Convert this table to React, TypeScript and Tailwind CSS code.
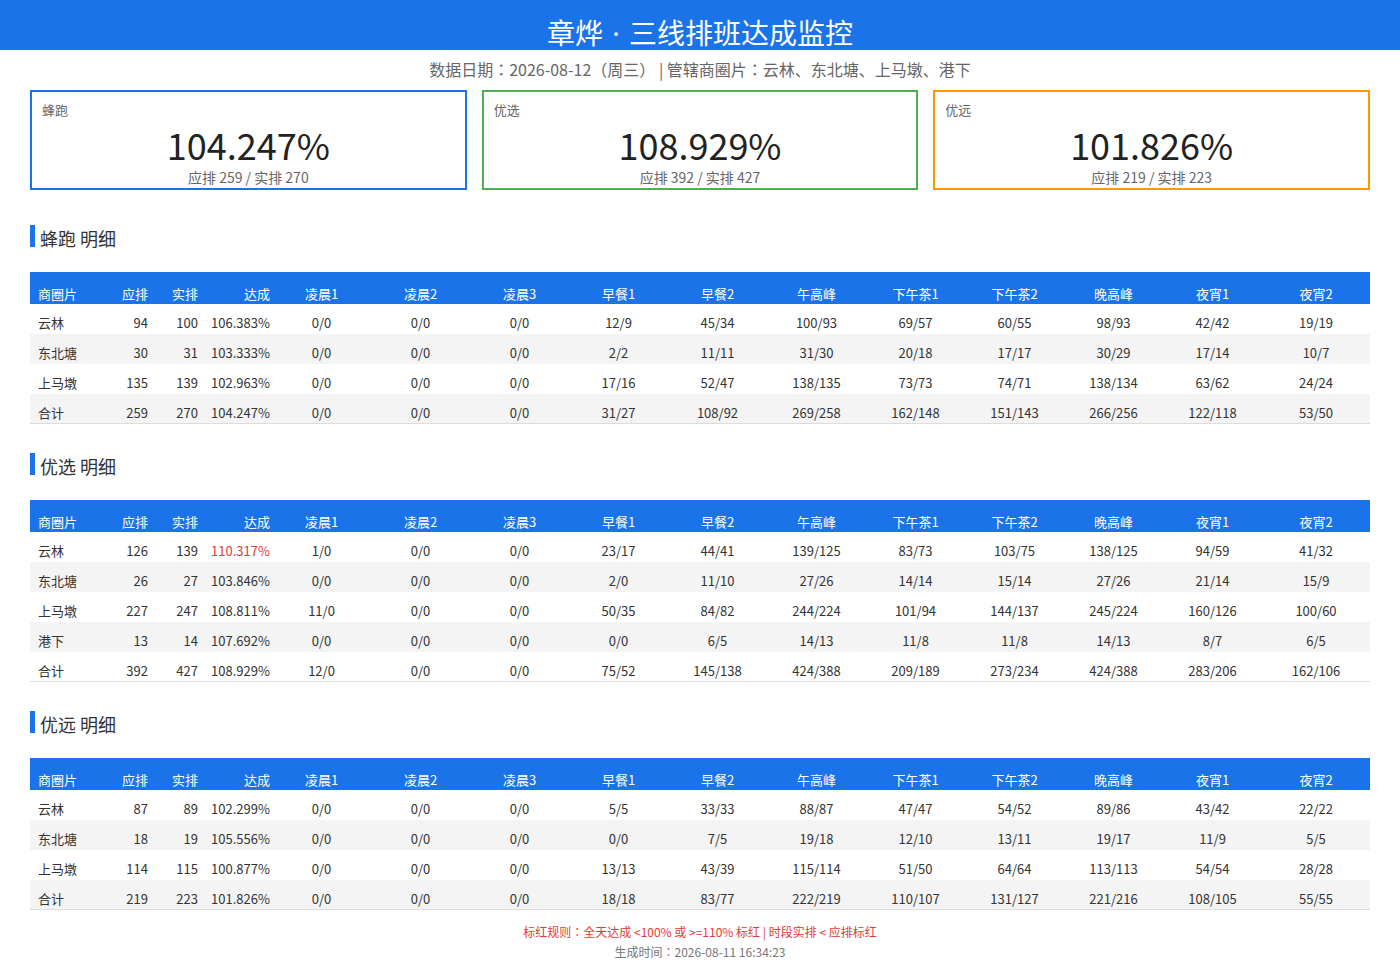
import React from "react";

type Row = { name: string; plan: string; actual: string; rate: string; red?: boolean; slots: string[] };

const HEAD = ["凌晨1", "凌晨2", "凌晨3", "早餐1", "早餐2", "午高峰", "下午茶1", "下午茶2", "晚高峰", "夜宵1", "夜宵2"];

const mk = (s: string, red = false): Row => {
  const p = s.split(" ");
  return { name: p[0], plan: p[1], actual: p[2], rate: p[3], red, slots: p.slice(4) };
};

const T1: Row[] = [
  mk("云林 94 100 106.383% 0/0 0/0 0/0 12/9 45/34 100/93 69/57 60/55 98/93 42/42 19/19"),
  mk("东北塘 30 31 103.333% 0/0 0/0 0/0 2/2 11/11 31/30 20/18 17/17 30/29 17/14 10/7"),
  mk("上马墩 135 139 102.963% 0/0 0/0 0/0 17/16 52/47 138/135 73/73 74/71 138/134 63/62 24/24"),
  mk("合计 259 270 104.247% 0/0 0/0 0/0 31/27 108/92 269/258 162/148 151/143 266/256 122/118 53/50"),
];
const T2: Row[] = [
  mk("云林 126 139 110.317% 1/0 0/0 0/0 23/17 44/41 139/125 83/73 103/75 138/125 94/59 41/32", true),
  mk("东北塘 26 27 103.846% 0/0 0/0 0/0 2/0 11/10 27/26 14/14 15/14 27/26 21/14 15/9"),
  mk("上马墩 227 247 108.811% 11/0 0/0 0/0 50/35 84/82 244/224 101/94 144/137 245/224 160/126 100/60"),
  mk("港下 13 14 107.692% 0/0 0/0 0/0 0/0 6/5 14/13 11/8 11/8 14/13 8/7 6/5"),
  mk("合计 392 427 108.929% 12/0 0/0 0/0 75/52 145/138 424/388 209/189 273/234 424/388 283/206 162/106"),
];
const T3: Row[] = [
  mk("云林 87 89 102.299% 0/0 0/0 0/0 5/5 33/33 88/87 47/47 54/52 89/86 43/42 22/22"),
  mk("东北塘 18 19 105.556% 0/0 0/0 0/0 0/0 7/5 19/18 12/10 13/11 19/17 11/9 5/5"),
  mk("上马墩 114 115 100.877% 0/0 0/0 0/0 13/13 43/39 115/114 51/50 64/64 113/113 54/54 28/28"),
  mk("合计 219 223 101.826% 0/0 0/0 0/0 18/18 83/77 222/219 110/107 131/127 221/216 108/105 55/55"),
];

const GRID = "grid grid-cols-[70px_50px_50px_72px_repeat(10,99px)_1fr]";

const Colon = () => <span className="font-['Noto_Sans_CJK_JP']">：</span>;

function Card({ title, value, sub, border }: { title: string; value: string; sub: string; border: string }) {
  return (
    <div className={`h-[100px] border-2 ${border} px-[10px] pt-[9px] flex flex-col`}>
      <div className="text-[13px] leading-[18px] text-[#666]">{title}</div>
      <div className="mt-[8px] text-center text-[36px] leading-[34px] text-[#222]">{value}</div>
      <div className="mt-[7px] text-center text-[14px] leading-[18px] text-[#666]">{sub}</div>
    </div>
  );
}

function Section({ title, rows, mt }: { title: string; rows: Row[]; mt: string }) {
  return (
    <div className={mt}>
      <div className="flex items-center h-[22px]">
        <div className="w-[5px] h-[22px] bg-[#1a73e8]" />
        <div className="ml-[5px] text-[18px] leading-[22px] translate-y-[2px] text-[#333]">{title}</div>
      </div>
      <div className="mt-[25px] text-[13px]">
        <div className={`${GRID} h-[32px] bg-[#1a73e8] text-white leading-[20px] pt-[12px]`}>
          <div className="pl-[8px]">商圈片</div>
          <div className="text-right pr-[2px]">应排</div>
          <div className="text-right pr-[2px]">实排</div>
          <div className="text-right pr-[2px]">达成</div>
          {HEAD.map((h) => (
            <div key={h} className="text-center">{h}</div>
          ))}
        </div>
        {rows.map((r, i) => (
          <div
            key={r.name}
            className={`${GRID} h-[30px] leading-[20px] pt-[9px] text-[#333] ${i % 2 === 1 ? "bg-[#f4f4f4]" : "bg-white"} ${i === rows.length - 1 ? "border-b border-[#dddddd]" : ""}`}
          >
            <div className="pl-[8px]">{r.name}</div>
            <div className="text-right pr-[2px]">{r.plan}</div>
            <div className="text-right pr-[2px]">{r.actual}</div>
            <div className={`text-right pr-[2px] ${r.red ? "text-[#e53935]" : ""}`}>{r.rate}</div>
            {r.slots.map((s, j) => (
              <div key={j} className="text-center">{s}</div>
            ))}
          </div>
        ))}
      </div>
    </div>
  );
}

export default function App() {
  return (
    <div className="w-[1400px] min-h-[974px] bg-white" style={{ fontFamily: '"Noto Sans CJK SC", "Noto Sans", sans-serif' }}>
      <div className="h-[50px] bg-[#1a73e8] flex justify-center pt-[14px]">
        <div className="text-white text-[28px] leading-[36px] whitespace-nowrap">
          章烨 <span className="font-['Noto_Sans'] mx-[3px]">·</span> 三线排班达成监控
        </div>
      </div>
      <div className="mt-[8px] text-center text-[16px] leading-[22px] text-[#666]">
        数据日期<Colon />2026-08-12（周三） | 管辖商圈片<Colon />云林、东北塘、上马墩、港下
      </div>
      <div className="px-[30px]">
        <div className="mt-[10px] grid grid-cols-3 gap-[15px]">
          <Card title="蜂跑" value="104.247%" sub="应排 259 / 实排 270" border="border-[#1a73e8]" />
          <Card title="优选" value="108.929%" sub="应排 392 / 实排 427" border="border-[#4caf50]" />
          <Card title="优远" value="101.826%" sub="应排 219 / 实排 223" border="border-[#ff9800]" />
        </div>
        <Section title="蜂跑 明细" rows={T1} mt="mt-[35px]" />
        <Section title="优选 明细" rows={T2} mt="mt-[29px]" />
        <Section title="优远 明细" rows={T3} mt="mt-[29px]" />
        <div className="mt-[12px] text-center text-[12px] leading-[20px] text-[#e53935]">
          标红规则<Colon />全天达成 &lt;100% 或 &gt;=110% 标红 | 时段实排 &lt; 应排标红
        </div>
        <div className="text-center text-[12px] leading-[20px] text-[#777]">
          生成时间<Colon />2026-08-11 16:34:23
        </div>
      </div>
    </div>
  );
}
